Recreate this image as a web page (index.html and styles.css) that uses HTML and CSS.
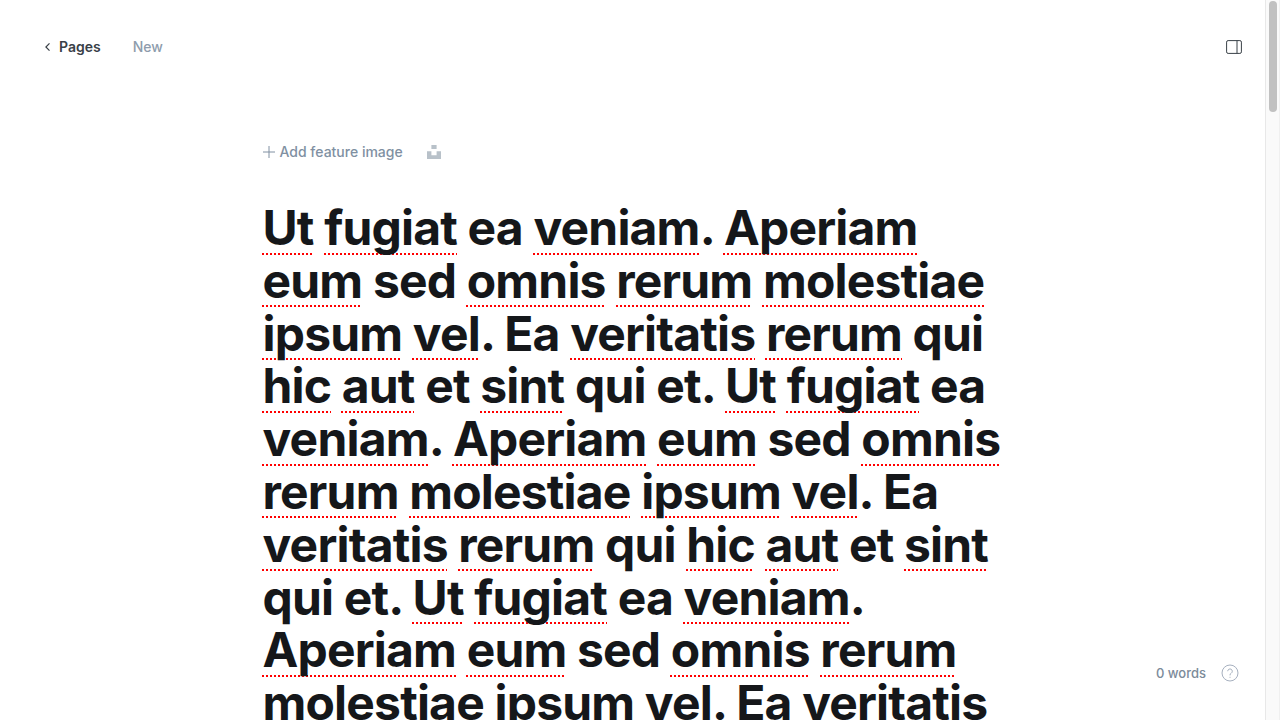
FILE: index.html
```html
<!DOCTYPE html>
<html lang="en">
<head>
<meta charset="utf-8">
<meta name="viewport" content="width=device-width, initial-scale=1">
<title>New page</title>
<link rel="stylesheet" href="styles.css">
</head>
<body>
<div class="editor">
  <div class="editor-main">
    <header class="editor-header">
      <nav class="breadcrumb">
        <a class="back-link" href="#pages">
          <svg class="back-icon" viewBox="0 0 5 8" aria-hidden="true"><path d="M4.500.4.9 4l3.600 3.600"/></svg>
          Pages
        </a>
        <span class="status">New</span>
      </nav>
      <button class="icon-button" type="button" aria-label="Settings">
        <svg class="sidebar-icon" viewBox="0 0 16 14" aria-hidden="true"><rect x=".6" y=".6" width="14.8" height="12.8" rx="1.5"/><path d="M11 .6v12.8"/></svg>
      </button>
    </header>
    <main class="editor-pane">
      <div class="feature-image">
        <button class="add-image" type="button">
          <svg class="plus-icon" viewBox="0 0 12 12" aria-hidden="true"><path d="M6 0v12M0 6h12"/></svg>
          Add feature image
        </button>
        <button class="icon-button" type="button" aria-label="Unsplash">
          <svg class="unsplash-icon" viewBox="0 0 14 14" aria-hidden="true"><path d="M4.4 0h5.2v4H4.4zM0 6.200h4.400v4h5.200v-4H14V14H0z"/></svg>
        </button>
      </div>
      <h1 class="title" contenteditable="true" spellcheck="false" role="textbox" aria-label="Page title"><span class="sp">Ut</span> <span class="sp">fugiat</span> ea <span class="sp">veniam</span>. <span class="sp">Aperiam</span> <span class="sp">eum</span> sed <span class="sp">omnis</span> <span class="sp">rerum</span> <span class="sp">molestiae</span> <span class="sp">ipsum</span> <span class="sp">vel</span>. Ea <span class="sp">veritatis</span> <span class="sp">rerum</span> qui <span class="sp">hic</span> <span class="sp">aut</span> et <span class="sp">sint</span> qui et. <span class="sp">Ut</span> <span class="sp">fugiat</span> ea <span class="sp">veniam</span>. <span class="sp">Aperiam</span> <span class="sp">eum</span> sed <span class="sp">omnis</span> <span class="sp">rerum</span> <span class="sp">molestiae</span> <span class="sp">ipsum</span> <span class="sp">vel</span>. Ea <span class="sp">veritatis</span> <span class="sp">rerum</span> qui <span class="sp">hic</span> <span class="sp">aut</span> et <span class="sp">sint</span> qui et. <span class="sp">Ut</span> <span class="sp">fugiat</span> ea <span class="sp">veniam</span>. <span class="sp">Aperiam</span> <span class="sp">eum</span> sed <span class="sp">omnis</span> <span class="sp">rerum</span> <span class="sp">molestiae</span> <span class="sp">ipsum</span> <span class="sp">vel</span>. Ea <span class="sp">veritatis</span></h1>
    </main>
    <footer class="editor-footer">
      <span>0 words</span>
      <a class="help-link" href="#help" aria-label="Help">
        <svg class="help-icon" viewBox="0 0 18 18" aria-hidden="true"><circle cx="9" cy="9" r="8"/><path d="M6.700 7.200a2.300 2.300 0 1 1 3.500 2c-.8.500-1.200.900-1.200 1.800v.4M9 12.800v1"/></svg>
      </a>
    </footer>
  </div>
  <div class="scrollbar" aria-hidden="true"><div class="scroll-thumb"></div></div>
</div>
</body>
</html>
```
FILE: styles.css
```css
* { box-sizing: border-box; }
body {
  margin: 0;
  background: #fff;
  color: #15171a;
  font-family: Inter, "Liberation Sans", sans-serif;
  font-size: 14px;
  line-height: 16px;
}
a { color: inherit; text-decoration: none; }
button {
  padding: 0;
  border: 0;
  background: none;
  color: inherit;
  font: inherit;
  cursor: pointer;
}
svg {
  display: block;
  fill: none;
  stroke: currentColor;
}
.editor {
  display: flex;
  height: 100vh;
  overflow: hidden;
}
.editor-main {
  position: relative;
  flex: 1;
  min-width: 0;
  overflow: hidden;
}
.editor-header {
  display: flex;
  align-items: center;
  justify-content: space-between;
  height: 94px;
  padding: 0 23px 0 45px;
}
.breadcrumb { display: flex; gap: 32px; font-weight: 500; }
.back-link {
  display: flex;
  align-items: center;
  gap: 9px;
  color: #394047;
  font-weight: 600;
}
.back-icon { width: 5px; height: 8px; stroke-width: 1.2; }
.status { color: #8e9cac; }
.icon-button { color: #394047; }
.sidebar-icon { width: 16px; height: 14px; stroke-width: 1; }
.scrollbar {
  width: 15px;
  padding: 1px 2px 1px 3px;
  border-left: 1px solid #e8e8e8;
  border-right: 1px solid #f0f0f0;
  background: #fafafa;
}
.scroll-thumb {
  width: 8px;
  height: 111px;
  border-radius: 4px;
  background: #c1c1c1;
}
.editor-pane {
  max-width: 740px;
  margin: 0 auto;
  padding-top: 48px;
}
.feature-image {
  display: flex;
  align-items: center;
  gap: 24px;
  height: 20px;
}
.add-image {
  display: flex;
  align-items: center;
  gap: 5px;
  color: #8090a2;
  font-weight: 500;
}
.plus-icon { width: 12px; height: 12px; stroke-width: 1; }
.unsplash-icon { width: 14px; height: 14px; fill: #b8c1c9; stroke: none; }
.title {
  margin: 40px 0 0;
  font-size: 48px;
  font-weight: 700;
  line-height: 1.1;
  letter-spacing: -0.017em;
  outline: none;
}
.sp {
  text-decoration: underline dotted #f00 2px;
  text-decoration-skip-ink: none;
  text-underline-offset: 8px;
}
.editor-footer {
  position: absolute;
  right: 26px;
  bottom: 38px;
  display: flex;
  align-items: center;
  gap: 15px;
  color: #7c8b9a;
  font-size: 13px;
  font-weight: 500;
}
.help-link { color: #a6b0bf; }
.help-icon { width: 18px; height: 18px; stroke-width: 1; }
```
